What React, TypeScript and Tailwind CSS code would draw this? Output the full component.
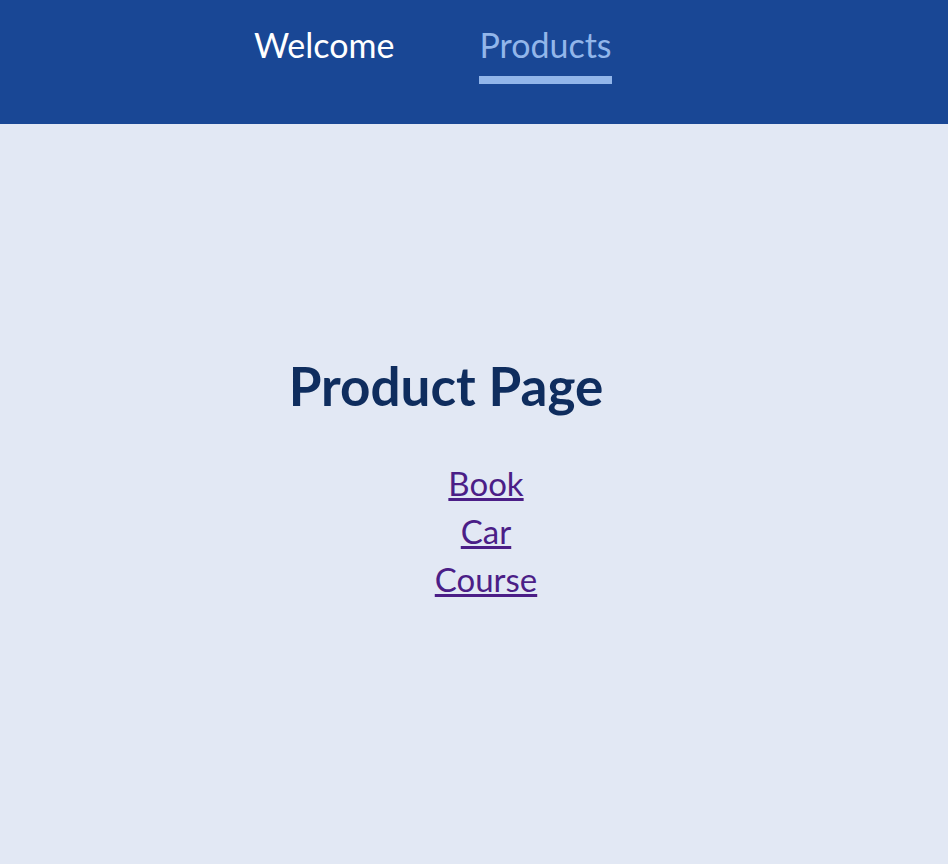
const LINKS = ['Book', 'Car', 'Course'];

export default function App() {
  return (
    <div className="min-h-[864px] bg-[#e2e8f4] font-['Lato','Noto_Sans',sans-serif]">
      <header className="h-[124px] bg-[#194795]">
        <nav className="flex items-start gap-[85px] pl-[254px] pt-[23px]">
          <a className="text-[34px] leading-[44px] text-white">Welcome</a>
          <a className="flex flex-col text-[34px] leading-[44px] text-[#92b6ea]">
            Products
            <span className="mt-[9px] h-[8px] bg-[#92b6ea]" />
          </a>
        </nav>
      </header>

      <main className="pt-[232px]">
        <h1 className="pr-[56px] text-center text-[53px] font-bold leading-[60px] text-[#0f2d5e]">
          Product Page
        </h1>
        <ul className="mt-[43px] pl-[24px] text-center">
          {LINKS.map((l) => (
            <li key={l} className="text-[33px] leading-[48px]">
              <a href="#" className="text-[#4b1e87] underline">
                {l}
              </a>
            </li>
          ))}
        </ul>
      </main>
    </div>
  );
}
